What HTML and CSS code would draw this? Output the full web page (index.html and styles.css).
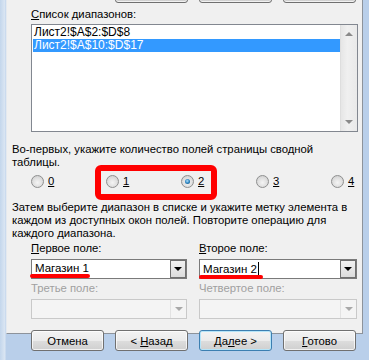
FILE: index.html
```html
<!DOCTYPE html>
<html lang="ru">
<head>
    <meta charset="UTF-8">
    <title>Мастер сводных таблиц</title>
    <link rel="stylesheet" href="styles.css">
</head>
<body>
<div class="frame">
    <div class="dialog">

        <div class="btn-row top-row">
            <span></span>
            <button class="btn"></button>
            <button class="btn"></button>
            <button class="btn"></button>
        </div>

        <div class="caption indent"><u>С</u>писок диапазонов:</div>
        <div class="listbox indent">
            <ul class="items">
                <li>Лист2!$A$2:$D$8</li>
                <li class="selected">Лист2!$A$10:$D$17</li>
            </ul>
            <div class="vscroll">
                <span class="arr up"></span>
                <span class="arr down"></span>
            </div>
        </div>

        <p class="text first">Во-первых, укажите количество полей страницы сводной<br>таблицы.</p>

        <div class="radios indent">
            <label class="radio"><span class="dot"></span><u>0</u></label>
            <label class="radio"><span class="dot"></span><u>1</u></label>
            <label class="radio"><span class="dot checked"></span><u>2</u></label>
            <label class="radio"><span class="dot"></span><u>3</u></label>
            <label class="radio"><span class="dot"></span><u>4</u></label>
            <div class="mark-box"></div>
        </div>

        <p class="text second">Затем выберите диапазон в списке и укажите метку элемента в<br>каждом из доступных окон полей. Повторите операцию для<br>каждого диапазона.</p>

        <div class="fields indent">
            <div class="field">
                <div class="caption"><u>П</u>ервое поле:</div>
                <div class="combo">
                    <span class="value">Магазин 1</span>
                    <span class="drop"></span>
                    <span class="mark-line one"></span>
                </div>
            </div>
            <div class="field">
                <div class="caption"><u>В</u>торое поле:</div>
                <div class="combo">
                    <span class="value">Магазин 2<span class="caret"></span></span>
                    <span class="drop"></span>
                    <span class="mark-line two"></span>
                </div>
            </div>
            <div class="field">
                <div class="caption disabled">Третье поле:</div>
                <div class="combo off">
                    <span class="value"></span>
                    <span class="drop"></span>
                </div>
            </div>
            <div class="field">
                <div class="caption disabled">Четвертое поле:</div>
                <div class="combo off">
                    <span class="value"></span>
                    <span class="drop"></span>
                </div>
            </div>
        </div>

        <div class="btn-row bottom-row">
            <button class="btn">Отмена</button>
            <button class="btn">&lt; <u>Н</u>азад</button>
            <button class="btn default">Да<u>л</u>ее &gt;</button>
            <button class="btn"><u>Г</u>отово</button>
        </div>

    </div>
</div>
</body>
</html>
```

FILE: styles.css
```css
body {
    margin: 0;
    font-family: "Liberation Sans", Arial, sans-serif;
    font-size: 11.3px;
    line-height: 13px;
    color: #000;
}

.frame {
    width: 369px;
    height: 360px;
    overflow: hidden;
    background: linear-gradient(to right, #c3d6ec 0, #dbe6f3 5px, #b9cfea 6px, #b9cfea 100%);
}

.dialog {
    margin-left: 6px;
    width: 355px;
    height: 351px;
    background-color: #f0f0f0;
    border-left: 1px solid #e4e9ef;
    border-right: 1px solid #8d939b;
    border-bottom: 1px solid #8d939b;
}

.indent {
    margin-left: 24px;
}

u {
    text-decoration: underline;
    text-underline-offset: 1px;
}

/* buttons */
.btn-row {
    display: grid;
    grid-template-columns: repeat(4, 73px);
    column-gap: 11px;
    margin-left: 24px;
}

.top-row {
    margin-top: -18px;
}

.bottom-row {
    margin-top: 11px;
}

.btn {
    height: 21px;
    padding: 0;
    font-family: "Liberation Sans", Arial, sans-serif;
    font-size: 11.3px;
    color: #000;
    border: 1px solid #707070;
    border-radius: 3px;
    background: linear-gradient(#f3f3f3 0, #ebebeb 50%, #dddddd 51%, #cfcfcf 100%);
    box-shadow: inset 0 0 0 1px rgba(255, 255, 255, 0.7);
}

.btn.default {
    border-color: #3c7fb1;
    box-shadow: inset 0 0 0 1px #b5e4f8;
}

/* list of ranges */
.caption {
    height: 13px;
}

.dialog > .caption {
    margin-top: 5px;
}

.caption.disabled {
    color: #a0a0a0;
}

.listbox {
    margin-top: 3px;
    width: 325px;
    height: 106px;
    display: flex;
    background: #fff;
    border: 1px solid #828790;
}

.items {
    flex: 1;
    list-style: none;
    margin: 0;
    padding: 1px 0 0 1px;
    font-size: 12px;
}

.items li {
    height: 13px;
    padding-left: 1px;
}

.items li.selected {
    background-color: #3399ff;
    color: #fff;
}

.vscroll {
    width: 17px;
    display: flex;
    flex-direction: column;
    justify-content: space-between;
    align-items: center;
    padding: 7px 0;
    box-sizing: border-box;
    background: linear-gradient(to right, #e6e6e6, #f0f0f0 40%, #e9e9e9);
    border-left: 1px solid #dedede;
}

.arr {
    width: 0;
    height: 0;
    border-left: 4px solid transparent;
    border-right: 4px solid transparent;
}

.arr.up {
    border-bottom: 4px solid #8a8a8a;
}

.arr.down {
    border-top: 4px solid #8a8a8a;
}

/* text blocks */
.text {
    margin: 0 0 0 5px;
}

.text.first {
    margin-top: 11px;
}

.text.second {
    margin-top: 13px;
}

/* radio buttons */
.radios {
    position: relative;
    margin-top: 5px;
    height: 14px;
    display: grid;
    grid-template-columns: repeat(5, 75px);
}

.radio {
    display: flex;
    align-items: center;
    gap: 4px;
}

.dot {
    width: 11px;
    height: 11px;
    border-radius: 50%;
    border: 1px solid #8e8f8f;
    background: radial-gradient(circle at 50% 60%, #f4f4f4 0, #e2e2e2 45%, #c9c9c9 100%);
    position: relative;
}

.dot.checked::after {
    content: "";
    position: absolute;
    left: 3px;
    top: 3px;
    width: 5px;
    height: 5px;
    border-radius: 50%;
    background: radial-gradient(circle at 45% 40%, #b4e1fb 0, #2e87c4 50%, #0d3f63 100%);
}

.mark-box {
    position: absolute;
    left: 64px;
    top: -9px;
    width: 110px;
    height: 23px;
    border: 6px solid #ff0000;
    border-radius: 6px;
}

/* field combos */
.fields {
    margin-top: 2px;
    display: grid;
    grid-template-columns: 156px 158px;
    column-gap: 12px;
    row-gap: 3px;
}

.field .caption {
    margin-bottom: 4px;
}

.combo {
    position: relative;
    height: 18px;
    display: flex;
    background: #fff;
    border: 1px solid #7a7a7a;
}

.combo .value {
    flex: 1;
    padding: 2px 0 0 3px;
    font-size: 11.5px;
}

.caret {
    display: inline-block;
    width: 1px;
    height: 13px;
    margin-left: 1px;
    vertical-align: -2px;
    background: #000;
}

.drop {
    width: 14px;
    border: 1px solid #707070;
    background: linear-gradient(#f2f2f2, #dcdcdc);
    display: flex;
    align-items: center;
    justify-content: center;
}

.drop::after {
    content: "";
    border-left: 4px solid transparent;
    border-right: 4px solid transparent;
    border-top: 4px solid #000;
}

.combo.off {
    background: #f4f4f4;
    border-color: #c9c9c9;
}

.combo.off .drop {
    border: none;
    border-left: 1px solid #e2e2e2;
    background: #f4f4f4;
    width: 15px;
}

.combo.off .drop::after {
    border-top-color: #a8a8a8;
}

.mark-line {
    position: absolute;
    height: 4px;
    border-radius: 2px;
    background: #ff0000;
}

.mark-line.one {
    left: -2px;
    top: 14px;
    width: 60px;
}

.mark-line.two {
    left: -1px;
    top: 15px;
    width: 64px;
}
```
